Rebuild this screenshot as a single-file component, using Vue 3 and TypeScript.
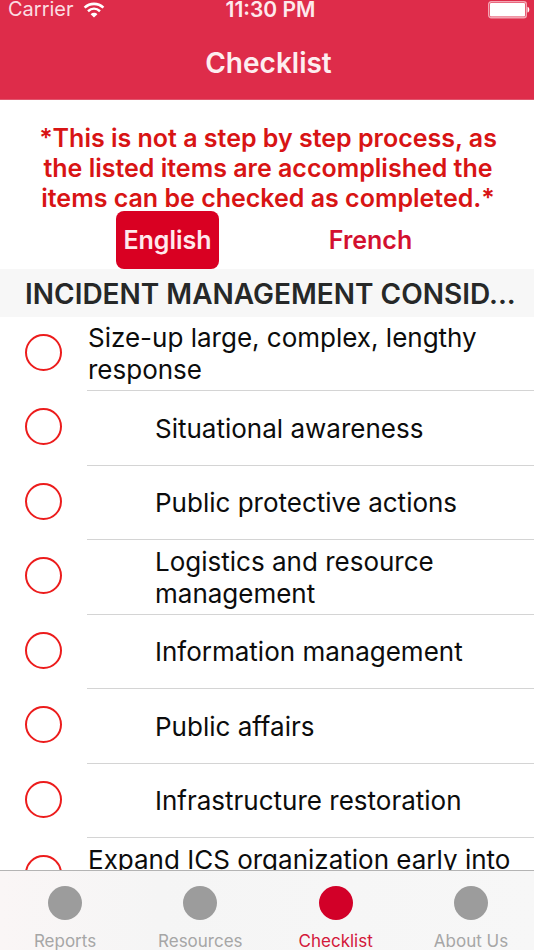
<script setup lang="ts">
import { ref } from 'vue'

interface Item {
  text: string
  nested: boolean
  tall?: boolean
  done: boolean
}

const languages = ['English', 'French']
const language = ref('English')

const items = ref<Item[]>([
  { text: 'Size-up large, complex, lengthy response', nested: false, done: false },
  { text: 'Situational awareness', nested: true, done: false },
  { text: 'Public protective actions', nested: true, done: false },
  { text: 'Logistics and resource management', nested: true, done: false },
  { text: 'Information management', nested: true, done: false },
  { text: 'Public affairs', nested: true, done: false },
  { text: 'Infrastructure restoration', nested: true, done: false },
  { text: 'Expand ICS organization early into', nested: false, tall: true, done: false },
])

const tabs = ['Reports', 'Resources', 'Checklist', 'About Us']
const activeTab = ref('Checklist')
</script>

<template>
  <div class="screen">
    <header class="top">
      <div class="status">
        <div class="carrier">
          <span>Carrier</span>
          <svg class="wifi" viewBox="0 0 22 16" aria-hidden="true">
            <path d="M1.6 5.6C7 .6 15 .6 20.400 5.600" fill="none" stroke="#fff" stroke-width="2.600" />
            <path d="M5 9.200c3.600-3.200 8.400-3.200 12 0" fill="none" stroke="#fff" stroke-width="2.500" />
            <path d="M7.600 12.200c2-1.900 4.800-1.900 6.800 0L11 15.600z" fill="#fff" />
          </svg>
        </div>
        <span class="clock">11:30 PM</span>
        <svg class="battery" viewBox="0 0 42 18" aria-hidden="true">
          <rect x=".7" y=".7" width="37.600" height="16" rx="2.500" fill="none" stroke="#f3a5b3" stroke-width="1.400" />
          <rect x="2" y="2" width="35" height="13.400" rx="1" fill="#fff" />
          <path d="M39.500 5.800c2.400.6 2.400 5.200 0 5.800z" fill="#fff" />
        </svg>
      </div>
      <h1>Checklist</h1>
    </header>

    <main class="content">
      <p class="notice">*This is not a step by step process, as the listed items are accomplished the items can be checked as completed.*</p>
      <div class="languages">
        <button
          v-for="name in languages"
          :key="name"
          type="button"
          :class="{ selected: name === language }"
          @click="language = name"
        >{{ name }}</button>
      </div>
      <h2>INCIDENT MANAGEMENT CONSID...</h2>
      <ul class="list">
        <li v-for="(item, i) in items" :key="item.text">
          <input :id="`item-${i}`" v-model="item.done" type="checkbox" />
          <label :for="`item-${i}`" :class="{ nested: item.nested }">
            <span :class="{ tall: item.tall }">{{ item.text }}</span>
          </label>
        </li>
      </ul>
    </main>

    <nav class="tabs">
      <button
        v-for="tab in tabs"
        :key="tab"
        type="button"
        :class="{ active: tab === activeTab }"
        @click="activeTab = tab"
      >
        <span class="dot"></span>
        <span>{{ tab }}</span>
      </button>
    </nav>
  </div>
</template>

<style>
body {
  margin: 0;
  background: #fff;
}
</style>

<style scoped>
.screen {
  display: flex;
  flex-direction: column;
  height: 100vh;
  overflow: hidden;
  font-family: Inter, "Liberation Sans", sans-serif;
  color: #0c0c0c;
  background: #fff;
}

button {
  margin: 0;
  padding: 0;
  border: 0;
  background: none;
  font: inherit;
  cursor: pointer;
}

.top {
  flex: none;
  color: #fff;
  background: #de2c4a;
  border-bottom: 1px solid #e0566e;
}

.status {
  display: grid;
  grid-template-columns: 1fr auto 1fr;
  align-items: center;
  height: 19px;
  padding: 0 4px 0 8px;
  font-size: 20px;
  line-height: 19px;
}

.carrier {
  display: flex;
  align-items: center;
  gap: 9px;
  color: #fbdde2;
}

.wifi {
  width: 22px;
  height: 16px;
}

.clock {
  padding-left: 3px;
  font-size: 21px;
  font-weight: 600;
  color: #fdeaed;
}

.battery {
  justify-self: end;
  width: 42px;
  height: 18px;
}

h1 {
  margin: 0;
  padding: 26px 0 18px 3px;
  font-size: 28px;
  font-weight: 600;
  line-height: 36px;
  text-align: center;
  color: #fdeef0;
}

.content {
  flex: 1;
  min-height: 0;
  overflow: hidden;
}

.notice {
  margin: 0;
  padding: 23px 30px 0 32px;
  font-size: 25px;
  font-weight: 600;
  line-height: 30px;
  text-align: center;
  color: #d81414;
}

.languages {
  display: grid;
  grid-template-columns: 1fr 1fr;
  justify-items: center;
  margin-top: -2px;
  padding: 0 62px 0 66px;
}

.languages button {
  height: 58px;
  padding: 0 7px;
  border-radius: 8px;
  font-size: 25px;
  font-weight: 600;
  color: #d3102f;
}

.languages .selected {
  color: #ffe9ec;
  background: #d90022;
}

h2 {
  margin: 0;
  padding: 2px 16px 0 25px;
  font-size: 28px;
  font-weight: 600;
  line-height: 46px;
  white-space: nowrap;
  overflow: hidden;
  color: #262828;
  background: #f7f7f7;
}

.list {
  margin: 0;
  padding: 0;
  list-style: none;
}

li {
  display: flex;
  align-items: center;
  gap: 25px;
  height: 74px;
  padding-left: 25px;
}

li:nth-child(even) {
  height: 75px;
}

input {
  flex: none;
  appearance: none;
  box-sizing: border-box;
  width: 37px;
  height: 37px;
  margin: 0 0 4px;
  border: 2px solid #ec1c1c;
  border-radius: 50%;
}

input:checked {
  background: #ec1c1c;
}

label {
  display: flex;
  flex: 1;
  align-items: center;
  align-self: stretch;
  padding: 1px 16px 0 1px;
  border-bottom: 1px solid #d4d4d4;
  font-size: 26px;
  line-height: 32px;
}

.nested {
  padding-left: 68px;
}

.tall {
  min-height: 64px;
}

.tabs {
  display: flex;
  flex: none;
  justify-content: space-between;
  box-sizing: border-box;
  height: 80px;
  padding: 0 11px 0 13px;
  border-top: 1px solid #b4b4b4;
  background: linear-gradient(90deg, #faf6f6, #f5f5f5 30%, #f7f7f7);
}

.tabs button {
  display: flex;
  flex-direction: column;
  align-items: center;
  gap: 12px;
  width: 104px;
  padding-top: 15px;
  font-size: 17px;
  line-height: 18px;
  white-space: nowrap;
  color: #a6a6a6;
}

.dot {
  flex: none;
  width: 34px;
  height: 34px;
  border-radius: 50%;
  background: #9c9c9c;
}

.tabs .active {
  color: #d3173a;
}

.active .dot {
  background: #d20028;
}
</style>
